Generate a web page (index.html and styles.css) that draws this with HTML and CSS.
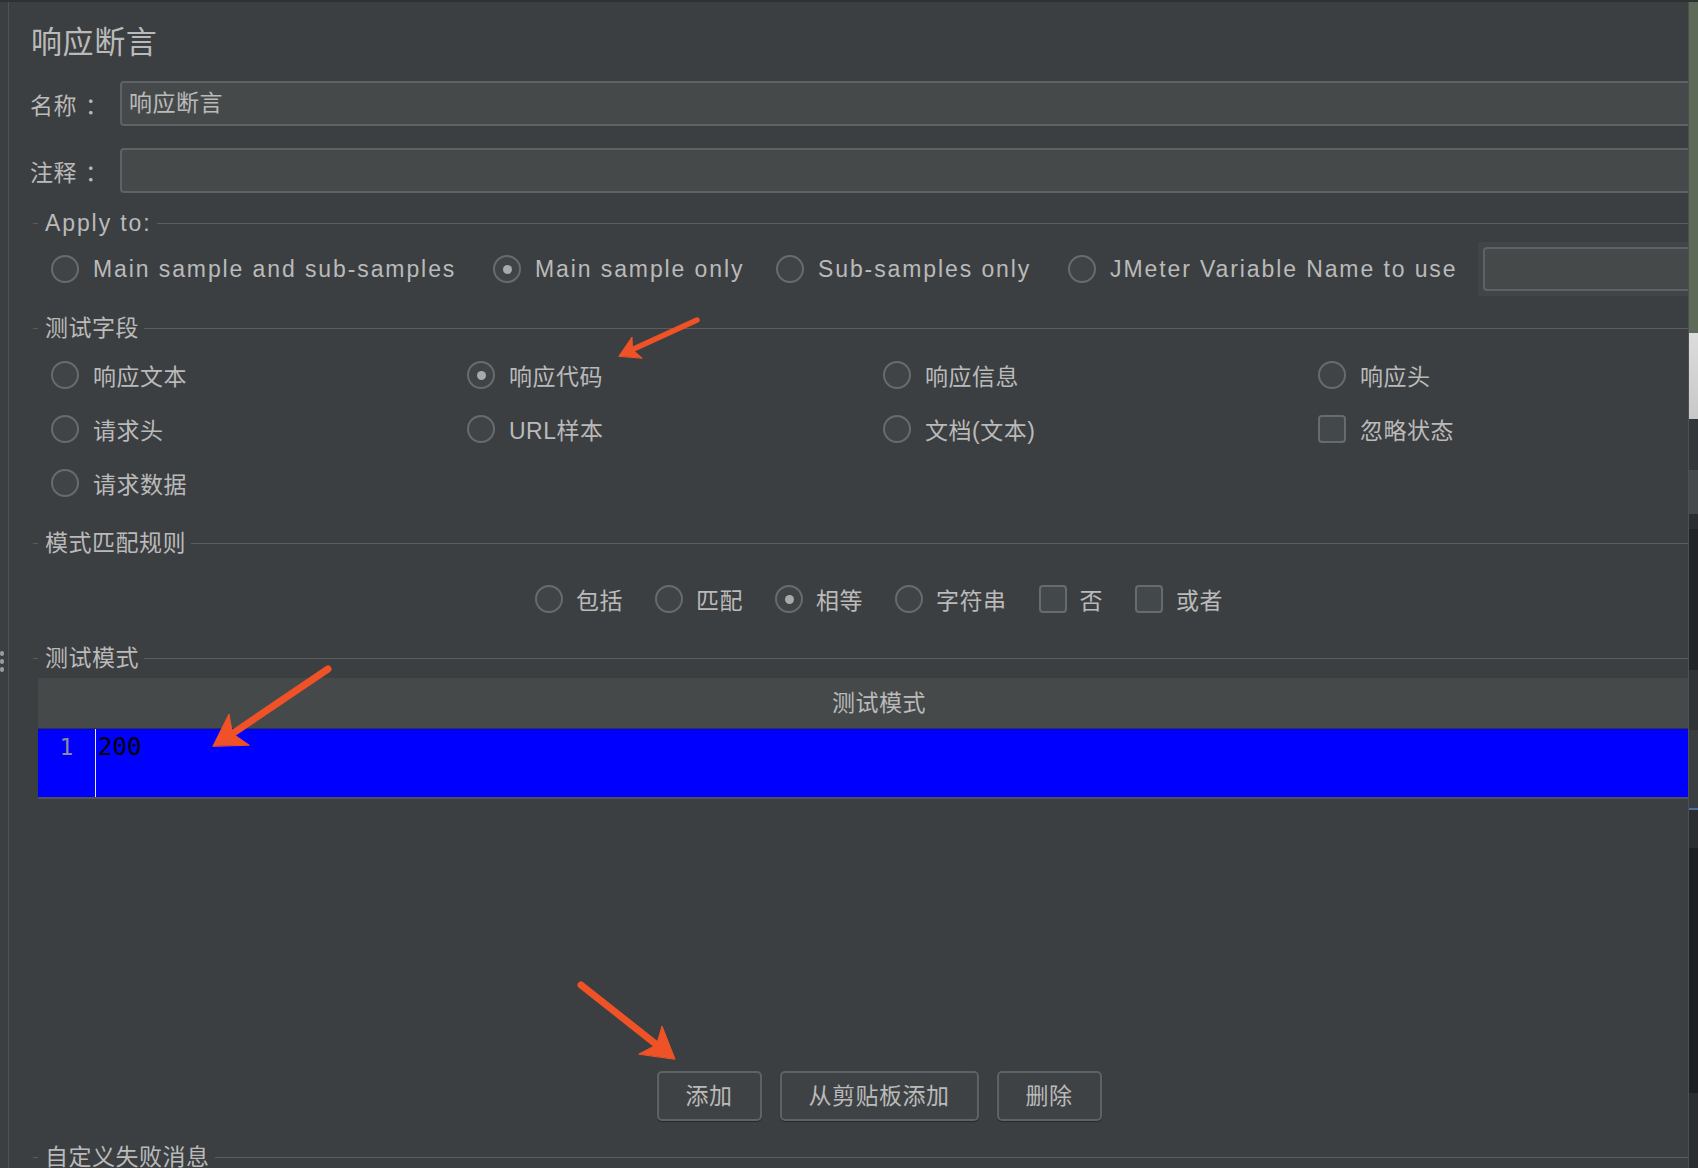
FILE: index.html
```html
<!DOCTYPE html>
<html lang="zh">
<head>
<meta charset="utf-8">
<title>响应断言</title>
<link rel="stylesheet" href="styles.css">
</head>
<body>
<div class="topbar"></div>
<div class="app">
  <div class="gutter"><span class="dot"></span><span class="dot"></span><span class="dot"></span></div>
  <div class="vline"></div>
  <div class="main">
    <div class="content">
      <div class="title">响应断言</div>
      <div class="field-row first">
        <div class="label">名称<span class="colon">：</span></div>
        <div class="input">响应断言</div>
      </div>
      <div class="field-row second">
        <div class="label">注释<span class="colon">：</span></div>
        <div class="input"></div>
      </div>

      <div class="fieldset fs-apply">
        <div class="legend"><span class="dash"></span><span class="legend-text en">Apply to:</span><span class="rule"></span></div>
        <div class="apply-grid">
          <div class="opt"><span class="radio"></span><span class="en">Main sample and sub-samples</span></div>
          <div class="opt"><span class="radio on"></span><span class="en">Main sample only</span></div>
          <div class="opt"><span class="radio"></span><span class="en">Sub-samples only</span></div>
          <div class="opt"><span class="radio"></span><span class="en">JMeter Variable Name to use</span></div>
          <div class="var-box"><div class="input var-input"></div></div>
        </div>
      </div>

      <div class="fieldset fs-field">
        <div class="legend"><span class="dash"></span><span class="legend-text">测试字段</span><span class="rule"></span></div>
        <div class="field-grid">
          <div class="opt"><span class="radio"></span><span>响应文本</span></div>
          <div class="opt"><span class="radio on"></span><span>响应代码</span></div>
          <div class="opt"><span class="radio"></span><span>响应信息</span></div>
          <div class="opt"><span class="radio"></span><span>响应头</span></div>
          <div class="opt"><span class="radio"></span><span>请求头</span></div>
          <div class="opt"><span class="radio"></span><span>URL样本</span></div>
          <div class="opt"><span class="radio"></span><span>文档(文本)</span></div>
          <div class="opt"><span class="check"></span><span>忽略状态</span></div>
          <div class="opt"><span class="radio"></span><span>请求数据</span></div>
        </div>
      </div>

      <div class="fieldset fs-rule">
        <div class="legend"><span class="dash"></span><span class="legend-text">模式匹配规则</span><span class="rule"></span></div>
        <div class="match-row">
          <div class="opt"><span class="radio"></span><span>包括</span></div>
          <div class="opt"><span class="radio"></span><span>匹配</span></div>
          <div class="opt"><span class="radio on"></span><span>相等</span></div>
          <div class="opt"><span class="radio"></span><span>字符串</span></div>
          <div class="opt"><span class="check"></span><span>否</span></div>
          <div class="opt"><span class="check"></span><span>或者</span></div>
        </div>
      </div>

      <div class="fieldset fs-pattern">
        <div class="legend"><span class="dash"></span><span class="legend-text">测试模式</span><span class="rule"></span></div>
        <div class="table">
          <div class="thead">测试模式</div>
          <div class="trow">
            <div class="rownum">1</div>
            <div class="cell">200</div>
          </div>
        </div>
        <div class="buttons">
          <div class="btn">添加</div>
          <div class="btn">从剪贴板添加</div>
          <div class="btn">删除</div>
        </div>
      </div>

      <div class="fieldset fs-msg">
        <div class="legend"><span class="dash"></span><span class="legend-text">自定义失败消息</span><span class="rule"></span></div>
      </div>
    </div>
  </div>
  <div class="rborder"></div>
  <div class="rstrip">
    <div class="rs rs-green"></div>
    <div class="rs rs-light"></div>
    <div class="rs rs-a"></div>
    <div class="rs rs-b"></div>
    <div class="rs rs-c"></div>
    <div class="rs rs-d"></div>
    <div class="rs rs-e"></div>
    <div class="rs rs-f"></div>
    <div class="rs rs-g"></div>
    <div class="rs rs-h"></div>
    <div class="rs rs-i"></div>
  </div>
</div>

<svg class="arrows" width="1698" height="1168" viewBox="0 0 1698 1168">
  <g fill="#ef5226" stroke="#ef5226" stroke-linecap="round" stroke-linejoin="round">
    <line x1="697" y1="320" x2="632.5" y2="349.6" stroke-width="5.5"/>
    <polygon points="619,356 632,337 632.5,349.6 642,358" stroke-width="1"/>
    <line x1="328" y1="669" x2="232.5" y2="733.6" stroke-width="7"/>
    <polygon points="213,746 229,714 232.5,733.6 249,745" stroke-width="1"/>
    <line x1="581" y1="985" x2="656.6" y2="1044.7" stroke-width="7"/>
    <polygon points="675,1059 662,1026 656.6,1044.7 639,1054" stroke-width="1"/>
  </g>
</svg>
</body>
</html>
```

FILE: styles.css
```css
* { box-sizing: border-box; }

html, body {
  margin: 0;
  padding: 0;
}

body {
  width: 1698px;
  height: 1168px;
  overflow: hidden;
  position: relative;
  background: #3c3f41;
  color: #bababa;
  font-family: "Liberation Sans", "Noto Sans CJK SC", sans-serif;
  font-size: 23px;
  letter-spacing: 0.5px;
}

.topbar {
  height: 2px;
  background: #2e3032;
}

.app {
  display: flex;
  height: 1166px;
}

.gutter {
  width: 8px;
  flex: none;
  display: flex;
  flex-direction: column;
  gap: 3px;
  padding-top: 649px;
}

.dot {
  width: 4px;
  height: 5px;
  border-radius: 2px;
  background: #9a9a9a;
}

.vline {
  width: 1px;
  flex: none;
  background: #505355;
}

.main {
  width: 1679px;
  flex: none;
  overflow: hidden;
}

.content {
  width: 1740px;
  padding-left: 24px;
}

.title {
  margin-top: 20px;
  margin-left: -2px;
  height: 41px;
  line-height: 41px;
  font-size: 31px;
  letter-spacing: 0.6px;
}

.field-row {
  display: flex;
  align-items: center;
  height: 45px;
  margin-left: -3px;
}
.field-row.first { margin-top: 18px; }
.field-row.second { margin-top: 22px; }

.label {
  width: 90px;
  flex: none;
  white-space: nowrap;
}

.colon {
  margin-left: 8px;
}

.input {
  flex: 1;
  height: 45px;
  line-height: 41px;
  background: #45494a;
  border: 2px solid #5f6264;
  border-radius: 4px;
  padding-left: 7px;
  margin-right: 20px;
}

.fieldset {
  width: 1692px;
}

.legend {
  display: flex;
  align-items: center;
  height: 31px;
}

.dash {
  width: 5px;
  height: 1px;
  background: #5b5e60;
  flex: none;
}

.legend-text {
  padding: 0 5px 0 7px;
  line-height: 31px;
  flex: none;
}

.rule {
  flex: 1;
  height: 1px;
  background: #5b5e60;
}

.en {
  font-size: 23px;
  letter-spacing: 1.9px;
}

.fs-apply { margin-top: 15px; }
.fs-field { margin-top: 17px; }
.fs-rule { margin-top: 18px; }
.fs-pattern { margin-top: 21px; }
.fs-msg { margin-top: 21px; }

.apply-grid {
  margin-top: 3px;
  display: grid;
  grid-template-columns: 442px 283px 292px 410px 1fr;
  height: 54px;
  padding-left: 18px;
  align-items: center;
}

.opt {
  display: flex;
  align-items: center;
  gap: 14px;
  white-space: nowrap;
}

.radio {
  width: 28px;
  height: 28px;
  border-radius: 50%;
  border: 2px solid #686b6d;
  background: #404446;
  flex: none;
  display: flex;
  align-items: center;
  justify-content: center;
}

.radio.on::after {
  content: "";
  width: 9px;
  height: 9px;
  border-radius: 50%;
  background: #a9a9a9;
}

.check {
  width: 28px;
  height: 28px;
  border-radius: 4px;
  border: 2px solid #686b6d;
  background: #43494a;
  flex: none;
}

.var-box {
  height: 54px;
  background: #414547;
  padding: 5px;
  display: flex;
}

.var-input {
  height: 44px;
  margin-right: 0;
}

.field-grid {
  margin-top: 4px;
  display: grid;
  grid-template-columns: 416px 416px 435px 1fr;
  grid-auto-rows: 54px;
  padding-left: 18px;
  align-items: center;
}

.match-row {
  margin-top: 17px;
  height: 46px;
  display: flex;
  justify-content: center;
  align-items: center;
  gap: 32px;
}

.match-row .opt { gap: 13px; }

.table {
  margin: 4px 5px 0;
}

.thead {
  height: 51px;
  line-height: 50px;
  background: #45494a;
  border-bottom: 1px solid #303234;
  text-align: center;
}

.trow {
  display: flex;
  height: 68px;
  background: #0000ff;
  border-bottom: 2px solid #505355;
  box-sizing: content-box;
}

.rownum {
  width: 58px;
  flex: none;
  text-align: center;
  padding-top: 1px;
  line-height: 34px;
  font-family: "DejaVu Sans Mono", "Liberation Mono", monospace;
  font-size: 23px;
  letter-spacing: 0;
  color: #8a8aa0;
  border-right: 1px solid #e6e6f0;
}

.cell {
  padding-left: 2px;
  padding-top: 1px;
  line-height: 34px;
  font-family: "DejaVu Sans Mono", "Liberation Mono", monospace;
  font-size: 24px;
  letter-spacing: 0;
  color: #000000;
}

.buttons {
  margin-top: 272px;
  display: flex;
  justify-content: center;
  gap: 18px;
}

.btn {
  height: 50px;
  line-height: 46px;
  padding: 0 27px;
  border: 2px solid #5e6265;
  border-radius: 5px;
  background: #3f4244;
  box-shadow: 0 1px 1px rgba(0, 0, 0, 0.35);
}

.rborder {
  width: 1px;
  flex: none;
  background: #4d5052;
}

.rstrip {
  width: 9px;
  flex: none;
  display: flex;
  flex-direction: column;
}

.rs { flex: none; }
.rs-green { height: 331px; background: #5d6a57; }
.rs-light { height: 86px; background: linear-gradient(#dcdcdc, #c8c8c8); }
.rs-a { height: 51px; background: #33363a; }
.rs-b { height: 44px; background: #46494c; }
.rs-c { height: 15px; background: #2b2d30; }
.rs-d { height: 141px; background: #222427; }
.rs-e { height: 60px; background: #303236; }
.rs-f { height: 80px; background: #3b3e40; border-bottom: 2px solid #4a6fa5; }
.rs-g { height: 38px; background: #2b2d30; }
.rs-h { height: 245px; background: #1e1f22; }
.rs-i { height: 80px; background: #2b2d30; }

.arrows {
  position: absolute;
  top: 0;
  left: 0;
  pointer-events: none;
}
```
